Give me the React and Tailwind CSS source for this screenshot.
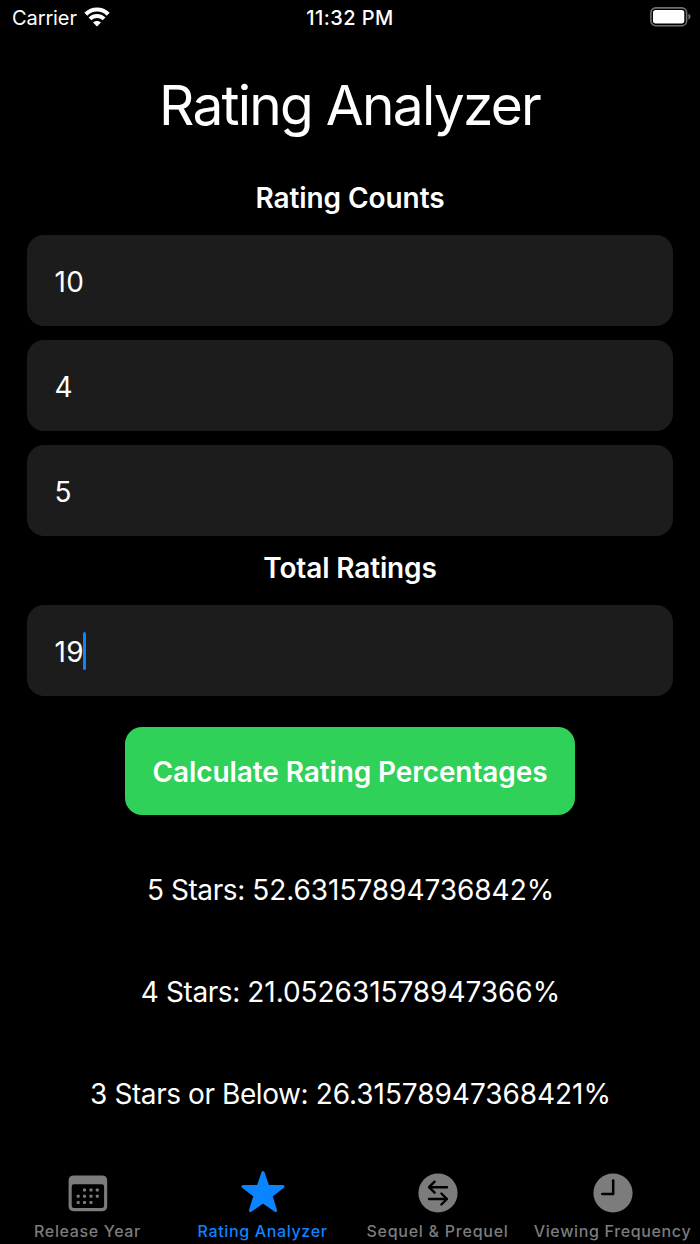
import { useState } from "react";
import clsx from "clsx";

function WifiIcon() {
  return (
    <svg className="mb-0.5" width="26" height="20" viewBox="0 0 26 20" fill="none" stroke="white">
      <path d="M1.8 7.2C8.2 .9 17.8 .9 24.2 7.2" strokeWidth="4.2" />
      <path d="M5.9 11.9C10 8 16 8 20.1 11.9" strokeWidth="4" />
      <path d="M13 19.4L9.1 15.6C11.3 13.6 14.7 13.6 16.9 15.6Z" fill="white" stroke="none" />
    </svg>
  );
}

function BatteryIcon() {
  return (
    <svg className="mb-0.5" width="42" height="20" viewBox="0 0 42 20">
      <rect x="0.9" y="0.9" width="35.7" height="17.8" rx="4.8" fill="none" stroke="#707070" strokeWidth="1.6" />
      <rect x="3" y="3" width="31.3" height="13.4" rx="2.6" fill="white" />
      <path d="M38.4 6.8C41.2 8 41.2 11.4 38.4 12.6Z" fill="#707070" />
    </svg>
  );
}

function CalendarIcon() {
  const dots = [
    [16.5, 15], [23, 15], [29.3, 15],
    [10.2, 21.2], [16.5, 21.2], [23, 21.2], [29.3, 21.2],
    [10.2, 27.5], [16.5, 27.5], [23, 27.5],
  ];

  return (
    <svg className="mt-px" width="40" height="37" viewBox="0 0 40 37" fill="#7c7c7c">
      <path
        fillRule="evenodd"
        d="M6 .5H34Q39.2 .5 39.2 5.7V31Q39.2 36.2 34 36.2H6Q.6 36.2 .6 31V5.7Q.6 .5 6 .5ZM6 9.3Q3.7 9.3 3.7 11.6V30.7Q3.7 33.1 6 33.1H33.7Q36.1 33.1 36.1 30.7V11.6Q36.1 9.3 33.7 9.3Z"
      />
      {dots.map(([x, y]) => (
        <rect key={`${x}-${y}`} x={x - 1.5} y={y - 1.5} width="3" height="3" rx="0.8" />
      ))}
    </svg>
  );
}

function StarIcon() {
  return (
    <svg className="mb-0.5" width="44" height="42" viewBox="0 0 44 42" fill="#0a84ff" stroke="#0a84ff" strokeWidth="3" strokeLinejoin="round">
      <path d="M22 1.6L26.8 15.6H42L30 24.7L34.6 39.6L22 30.8L9.4 39.6L14 24.7L2 15.6H17.2Z" />
    </svg>
  );
}

function SwapIcon() {
  return (
    <svg width="40" height="40" viewBox="0 0 40 40" fill="none">
      <circle cx="20" cy="20" r="19.6" fill="#7c7c7c" />
      <g stroke="black" strokeWidth="2.4" strokeLinecap="round" strokeLinejoin="round">
        <path d="M29 14.2H11M16.6 8.7L11 14.2L16.6 19.7" />
        <path d="M11 26H29M23.4 20.5L29 26L23.4 31.5" />
      </g>
    </svg>
  );
}

function ClockIcon() {
  return (
    <svg width="40" height="40" viewBox="0 0 40 40" fill="none">
      <circle cx="20" cy="20" r="19.6" fill="#7c7c7c" />
      <path d="M20.2 7.5V20.9H9.3" stroke="black" strokeWidth="2.5" strokeLinecap="round" strokeLinejoin="round" />
    </svg>
  );
}

const TABS = [
  { label: "Release Year", Icon: CalendarIcon, spacing: "tracking-[0.65px]" },
  { label: "Rating Analyzer", Icon: StarIcon, spacing: "tracking-[0.65px]" },
  { label: "Sequel & Prequel", Icon: SwapIcon, spacing: "tracking-[0.75px]" },
  { label: "Viewing Frequency", Icon: ClockIcon, spacing: "tracking-[0.65px]" },
];

function Field({ value, focused }) {
  return (
    <div className="flex h-[91px] items-center rounded-[17px] bg-[#1c1c1c] pl-[27.5px] text-[28px]">
      <span className="pt-[3px] tracking-[0.4px]">{value}</span>
      {focused && <span className="-ml-[1.5px] h-[38px] w-[3px] rounded-full bg-[#0a84ff]" />}
    </div>
  );
}

function Result({ label, value }) {
  return (
    <p>
      <span className="tracking-[-0.42px]">{label}: </span>
      <span className="tracking-[-0.05px]">{value}%</span>
    </p>
  );
}

export default function App() {
  const [activeTab, setActiveTab] = useState("Rating Analyzer");
  const counts = [10, 4, 5];
  const total = 19;

  const percent = (count) => (count / total) * 100;

  return (
    <div className="flex h-[1244px] w-[700px] flex-col overflow-hidden bg-black font-['Inter',sans-serif] text-white">
      {/* Status bar */}
      <div className="grid h-9 grid-cols-3 items-center text-[20px]">
        <div className="flex items-center gap-[7px] pl-3">
          <span className="tracking-[-0.1px]">Carrier</span>
          <WifiIcon />
        </div>
        <span className="text-center font-medium tracking-[0.45px]">11:32 PM</span>
        <div className="flex justify-end pr-2">
          <BatteryIcon />
        </div>
      </div>

      <h1 className="mt-[33px] pr-px text-center text-[55px] leading-[72px] tracking-[-1.75px]">Rating Analyzer</h1>

      {/* Inputs */}
      <div className="px-[27px]">
        <h2 className="mt-[39px] text-center text-[28px] leading-9 font-semibold tracking-[-0.08px]">Rating Counts</h2>
        <div className="mt-[19px] flex flex-col gap-[14px]">
          {counts.map((count, i) => (
            <Field key={i} value={count} />
          ))}
        </div>
        <h2 className="mt-[14px] mb-[19px] text-center text-[28px] leading-9 font-semibold tracking-[-0.15px]">Total Ratings</h2>
        <Field value={total} focused />
      </div>

      <button className="mt-[31px] h-[88px] w-[450px] self-center rounded-[17px] bg-[#30d158] pt-px text-[28px] font-semibold tracking-[-0.1px] whitespace-nowrap">
        Calculate Rating Percentages
      </button>

      {/* Results */}
      <div className="mt-[57px] flex flex-col gap-[66px] pl-px text-center text-[28px] leading-9 whitespace-nowrap">
        <Result label="5 Stars" value={percent(counts[0])} />
        <Result label="4 Stars" value={percent(counts[1])} />
        <Result label="3 Stars or Below" value={percent(counts[2])} />
      </div>

      {/* Tab bar */}
      <nav className="mt-auto grid h-[76px] grid-cols-4">
        {TABS.map(({ label, Icon, spacing }) => (
          <button
            key={label}
            onClick={() => setActiveTab(label)}
            className={clsx(
              "flex flex-col items-center text-[16px] leading-5 whitespace-nowrap",
              activeTab === label ? "text-[#0a84ff]" : "text-[#7c7c7c]"
            )}
          >
            <span className="flex h-12 items-center pt-px">
              <Icon />
            </span>
            <span className={clsx("mt-[5px] font-medium", spacing)}>{label}</span>
          </button>
        ))}
      </nav>
    </div>
  );
}
